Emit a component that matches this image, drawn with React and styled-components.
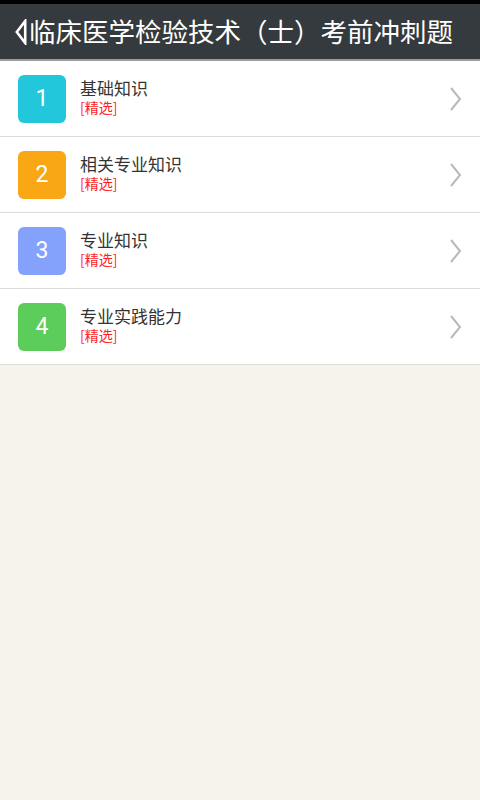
import React from 'react';
import styled, { createGlobalStyle } from 'styled-components';

const GlobalStyle = createGlobalStyle`
  html, body {
    margin: 0;
    padding: 0;
    background: #f6f3ec;
  }
  body {
    font-family: "Noto Sans CJK SC", "Roboto", sans-serif;
  }
`;

const Page = styled.div`
  width: 480px;
  min-height: 800px;
  background: #f6f3ec;
`;

const StatusBar = styled.div`
  height: 4px;
  background: #000;
`;

const Header = styled.div`
  height: 55px;
  background: #343a3d;
  border-bottom: 2px solid #9a9c9c;
  display: flex;
  align-items: center;
  padding-left: 15px;
  overflow: hidden;
`;

const Back = styled.svg`
  flex-shrink: 0;
  margin-right: 2px;
`;

const Title = styled.h1`
  margin: 0;
  color: #fff;
  font-family: "Noto Sans CJK SC", sans-serif;
  font-size: 26.5px;
  font-weight: 400;
  line-height: 1;
  white-space: nowrap;
`;

const List = styled.ul`
  list-style: none;
  margin: 0;
  padding: 0;
  background: #fff;
`;

const Row = styled.li`
  height: 75px;
  display: flex;
  align-items: center;
  padding: 0 18px;
  border-bottom: 1px solid #dddcda;
`;

const Badge = styled.div`
  width: 48px;
  height: 48px;
  border-radius: 6px;
  background: ${(p) => p.color};
  color: #fff;
  display: flex;
  align-items: center;
  justify-content: center;
  font-family: "Roboto", sans-serif;
  font-size: 23px;
  flex-shrink: 0;
`;

const Text = styled.div`
  flex: 1;
  margin-left: 14px;
  display: flex;
  flex-direction: column;
  margin-top: -4px;
`;

const Name = styled.div`
  font-size: 17px;
  color: #333;
  line-height: 21px;
`;

const Tag = styled.div`
  font-size: 14px;
  color: #ff1f1f;
  line-height: 18px;
`;

const Chevron = styled.svg`
  flex-shrink: 0;
  margin-right: -1px;
`;

const items = [
  { n: 1, name: '基础知识', color: '#23c7db' },
  { n: 2, name: '相关专业知识', color: '#faa715' },
  { n: 3, name: '专业知识', color: '#84a1fc' },
  { n: 4, name: '专业实践能力', color: '#5ccd5b' },
];

export default function App() {
  return (
    <Page>
      <GlobalStyle />
      <StatusBar />
      <Header>
        <Back width="12" height="26" viewBox="0 0 12 26">
          <path
            d="M10.2 2 L1.8 13 L10.2 24 Z"
            fill="none"
            stroke="#fff"
            strokeWidth="2.6"
            strokeLinejoin="miter"
          />
        </Back>
        <Title>临床医学检验技术（士）考前冲刺题</Title>
      </Header>
      <List>
        {items.map((it) => (
          <Row key={it.n}>
            <Badge color={it.color}>{it.n}</Badge>
            <Text>
              <Name>{it.name}</Name>
              <Tag>[精选]</Tag>
            </Text>
            <Chevron width="14" height="24" viewBox="0 0 14 24">
              <path d="M2 1 L11 12 L2 23" fill="none" stroke="#b9b9b9" strokeWidth="2" />
            </Chevron>
          </Row>
        ))}
      </List>
    </Page>
  );
}
